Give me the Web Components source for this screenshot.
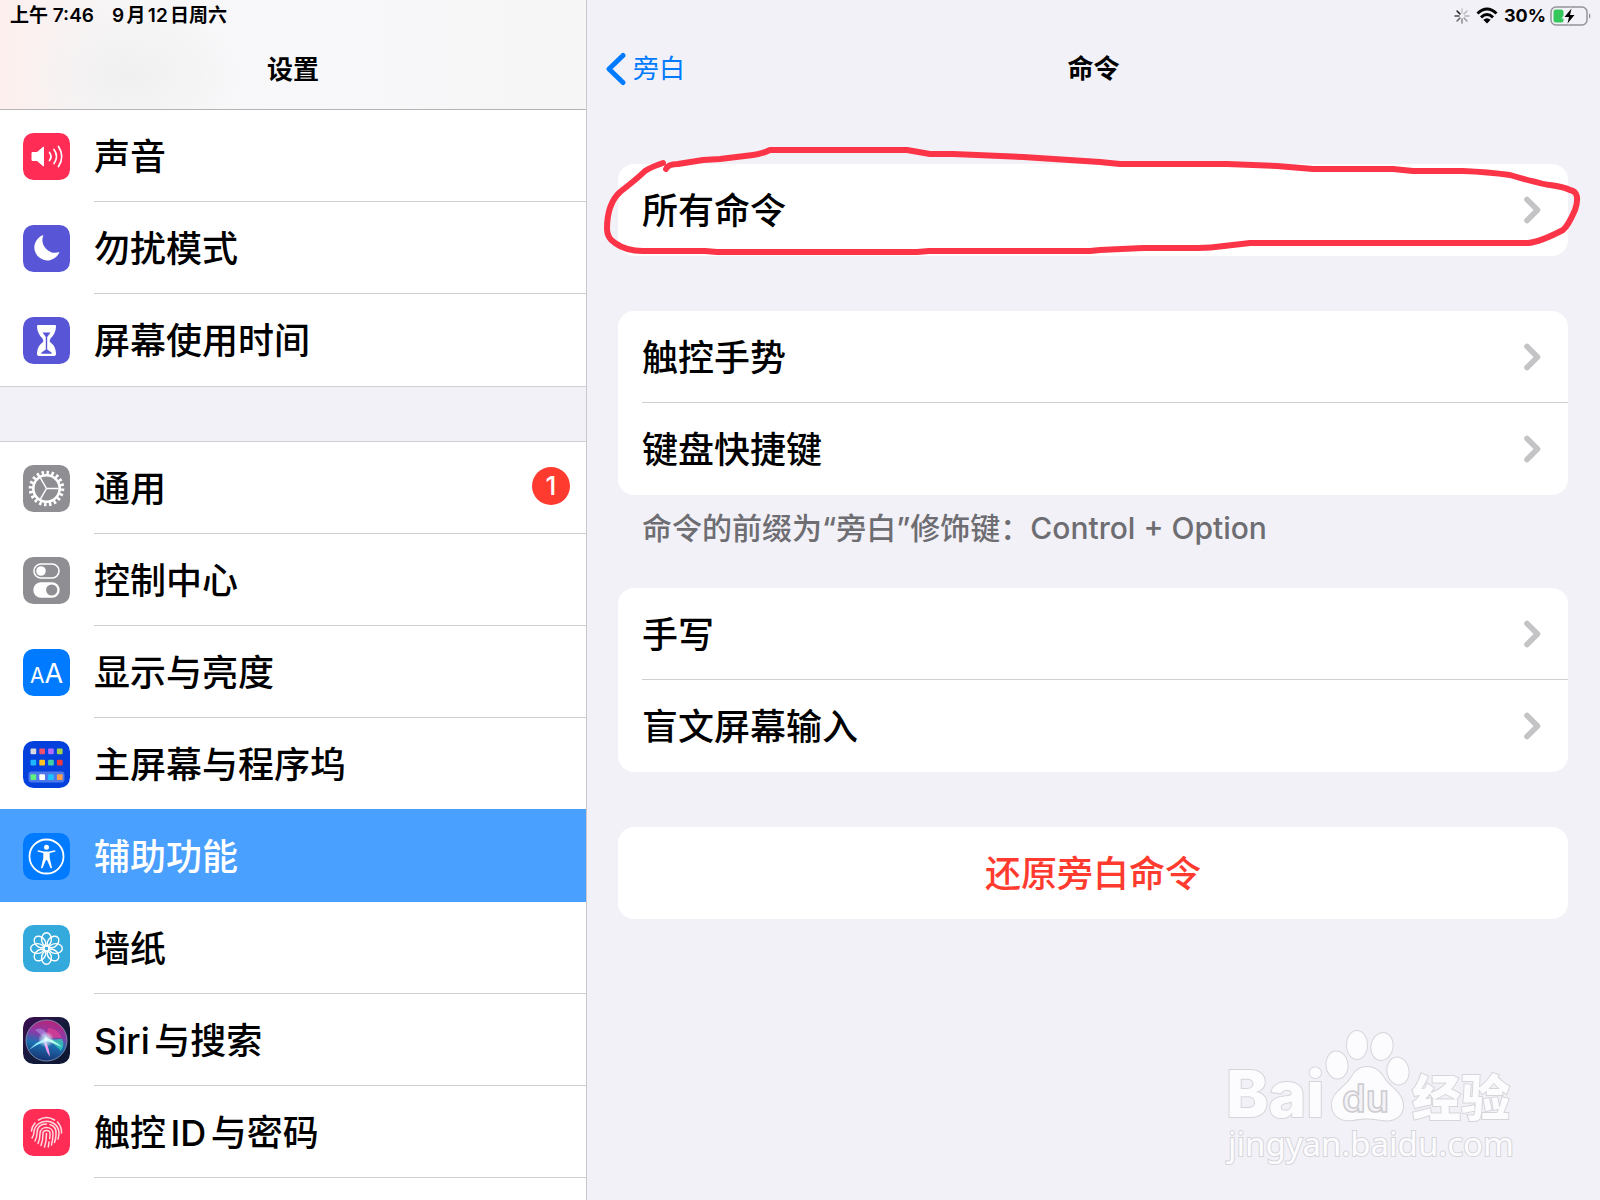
<!DOCTYPE html>
<html lang="zh-CN">
<head>
<meta charset="utf-8">
<meta name="viewport" content="width=device-width, initial-scale=1">
<title>设置</title>
<style>
  body {
    margin: 0;
    background: #f2f1f7;
    color: #000;
    font-family: Inter, "Noto Sans CJK SC", sans-serif;
    text-autospace: normal;
  }
</style>
</head>
<body>

<settings-app></settings-app>

<script>
// 47x47 tiles, the colour fills the rounded square
const ICONS = {
  sound: {
    color: '#ff2d55',
    art: `
      <path fill="#fff" stroke="#fff" stroke-linejoin="round" d="M9 19.5h5l6.5-5.5v19l-6.5-5.5h-5z"/>
      <g fill="none" stroke="#fff" stroke-width="1.7" stroke-linecap="round">
        <path d="M26.5 19.5q3 4 0 8M31 16.5q5 7 0 14M35.5 13.5q6.5 10 0 20"/>
      </g>`
  },
  moon: {
    color: '#5856d6',
    art: `<path fill="#fff" d="M20.5 10A13 13 0 1 0 36.5 27A12.8 12.8 0 0 1 20.5 10z"/>`
  },
  hourglass: {
    color: '#5856d6',
    art: `
      <path fill="#fff" d="M15 8h17q1.5 0 1 2c-.5 5-2 8-5.5 11.5q-1.5 2 0 4C31 28 32.5 31 33 36q.3 3-2 3H16q-2.3 0-2-3c.5-5 2-8 5.5-10.5q1.5-2 0-4C16 18 14.5 15 14 10q-.3-2 1-2z"/>
      <path fill="#5856d6" d="M19.5 15.5h8L24.2 20v12.5l4.3 3q1 1.3-.8 1.3h-8.4q-1.8 0-.8-1.3l4.3-3V20z"/>`
  },
  gear: {
    color: '#8e8e93',
    art: `
      <g fill="none" stroke="#fff">
        <circle cx="23.5" cy="23.5" r="13.2" stroke-width="2.6"/>
        <circle cx="23.5" cy="23.5" r="15.9" stroke-width="3.8" pathLength="40" stroke-dasharray="1 1"/>
        <path stroke-width="1.5" d="M23.5 23.5h12M23.5 23.5l-6-10.4M23.5 23.5l-6 10.4"/>
      </g>`
  },
  toggles: {
    color: '#8e8e93',
    art: `
      <rect x="11" y="7" width="25" height="14" rx="7" fill="none" stroke="#fff" stroke-width="1.6"/>
      <circle cx="18" cy="14" r="4.8" fill="#fff"/>
      <rect x="10.3" y="25.3" width="26.4" height="15.4" rx="7.7" fill="#fff"/>
      <circle cx="28.7" cy="33" r="5.6" fill="#8e8e93"/>`
  },
  text: {
    color: '#007aff',
    art: `
      <g fill="#fff" font-family="Inter, sans-serif" font-weight="400">
        <text x="7" y="33.5" font-size="21">A</text>
        <text x="21.5" y="33.5" font-size="27">A</text>
      </g>`
  },
  home: {
    color: '#0340dc',
    art: `
      <rect x="5.5" y="30.5" width="36" height="11" rx="3" fill="#4d78ea"/>
      ${['#d9d9de', '#f4516c', '#b26bff', '#a4d24a', '#1fb8ff', '#ffc31f', '#41d1a4', '#f0393c', '#5ff07e', '#ffffff', '#1fc3ff', '#ff9d4d']
        .map((fill, i) => `<rect x="${7.5 + (i % 4) * 8.8}" y="${[7.5, 18.7, 33.2][Math.floor(i / 4)]}" width="5.7" height="5.7" rx="1" fill="${fill}"/>`).join('')}`
  },
  access: {
    color: '#007aff',
    art: `
      <circle cx="23.5" cy="23.5" r="17" fill="none" stroke="#fff" stroke-width="1.8"/>
      <circle cx="23.5" cy="14.2" r="2.5" fill="#fff"/>
      <path fill="#fff" d="M15 17.3l6 1.1h5l6-1.1q1 .8 0 1.4l-5.3 1.3v5l2.3 9.7q-.7 1-1.5.2L24 27h-1l-3.5 7.9q-.8.8-1.5-.2l2.3-9.7v-5L15 18.7q-1-.6 0-1.4z"/>`
  },
  flower: {
    color: '#34aadc',
    art: `
      <g fill="none" stroke="#fff" stroke-width="1.4">
        ${[0, 45, 90, 135, 180, 225, 270, 315]
          .map(a => `<ellipse cx="23.5" cy="14.3" rx="4.9" ry="6.6" transform="rotate(${a} 23.5 23.5)"/>`).join('')}
        <circle cx="23.5" cy="23.5" r="2.6"/>
      </g>`
  },
  siri: {
    color: 'url(#night)',
    art: `
      <defs>
        <linearGradient id="night" x1="0" y1="0" x2="1" y2="1">
          <stop offset="0" stop-color="#3d0d52"/><stop offset=".5" stop-color="#151b3b"/><stop offset="1" stop-color="#0c1530"/>
        </linearGradient>
        <linearGradient id="orb" x1=".6" y1="0" x2=".4" y2="1">
          <stop offset="0" stop-color="#b82478"/><stop offset=".35" stop-color="#8b3aa8"/><stop offset=".6" stop-color="#1d6fb0"/><stop offset="1" stop-color="#16306f"/>
        </linearGradient>
        <radialGradient id="glow">
          <stop offset="0" stop-color="#fff"/><stop offset=".4" stop-color="#c6f3ff" stop-opacity=".7"/><stop offset="1" stop-color="#fff" stop-opacity="0"/>
        </radialGradient>
      </defs>
      <circle cx="23.5" cy="23.5" r="20.5" fill="url(#orb)" stroke="#8da0bb" stroke-width=".8"/>
      <path fill="#31d3ba" opacity=".75" d="M23 23l16-1q3 5-1 12-6-7-15-11z"/>
      <path fill="#ee3f91" opacity=".6" d="M23 22l2-11q10 0 14 10-8-1-16 1z"/>
      <path fill="#a78be2" opacity=".65" d="M23 22L12 13q5-3 9 0 4 4 3 9z"/>
      <path fill="#8be8fa" d="M6 33q8-9 18-12 2 3-2 4-8 2-16 8z"/>
      <path fill="#b8fff1" d="M22 20q9 3 17 10-9-4-17-7z"/>
      <path fill="#f19af0" d="M22 23q4 7 5 17-5-7-6-16z"/>
      <circle cx="23" cy="22.5" r="8" fill="url(#glow)"/>`
  },
  finger: {
    color: '#ff2d55',
    art: `
      <g fill="none" stroke="#ffdce3" stroke-width="1.5" stroke-linecap="round">
        <path d="M15.5 11q8-5 16 0M8.5 22q0-4 3.5-8M38.5 24q.5-6-4-11"/>
        <path d="M9 29q2-3 2-6c1-14 24-15 25 1q0 3-1 6M12 32q2-4 2-8c0-8 6-9 9.5-9M27 15.5c5 1.5 6.500 5 6 10q0 4-1.5 8"/>
        <path d="M15 34.5q2-4 2-10c0-8 13-8 13 0q0 6-1.500 11.500M18 36.500q2-5 2-12c0-4 7-4 7 0q0 3-.3 5M26 33l-.7 5M21.500 38q2-6 2-13.500"/>
      </g>`
  }
}

const MENU = [
  [
    { icon: 'sound', label: '声音' },
    { icon: 'moon', label: '勿扰模式' },
    { icon: 'hourglass', label: '屏幕使用时间', last: true }
  ],
  [
    { icon: 'gear', label: '通用', badge: 1 },
    { icon: 'toggles', label: '控制中心' },
    { icon: 'text', label: '显示与亮度' },
    { icon: 'home', label: '主屏幕与程序坞' },
    { icon: 'access', label: '辅助功能', selected: true },
    { icon: 'flower', label: '墙纸' },
    { icon: 'siri', label: 'Siri与搜索' },
    { icon: 'finger', label: '触控ID与密码' }
  ]
]

class SettingsIcon extends HTMLElement {
  connectedCallback () {
    const icon = ICONS[this.getAttribute('name')]
    this.attachShadow({ mode: 'open' }).innerHTML = /*html*/`
      <style>
        :host { display: block; flex: none; width: 47px; height: 47px; }
        svg { display: block; width: 100%; height: 100%; }
      </style>
      <svg viewBox="0 0 47 47" aria-hidden="true">
        <rect width="47" height="47" rx="10.5" fill="${icon.color}"/>
        ${icon.art}
      </svg>`
  }
}

class MenuRow extends HTMLElement {
  connectedCallback () {
    const badge = this.getAttribute('badge')
    this.attachShadow({ mode: 'open' }).innerHTML = /*html*/`
      <style>
        :host { display: block; }
        a {
          display: flex;
          align-items: center;
          gap: 24px;
          box-sizing: border-box;
          height: 92px;
          padding: 1px 0 0 23px;
          color: inherit;
          text-decoration: none;
        }
        .label {
          display: flex;
          flex: 1;
          align-items: center;
          justify-content: space-between;
          box-sizing: border-box;
          height: 100%;
          padding: 0 16px 4px 0;
          border-bottom: 1px solid #cfced3;
          font-size: 36px;
          font-weight: 500;
        }
        .badge {
          width: 38px;
          border-radius: 50%;
          background: #ff3b30;
          color: #fff;
          font-size: 26px;
          line-height: 38px;
          text-align: center;
        }
        :host([selected]) {
          background: #4aa0ff;
          box-shadow: 0 -1px #4aa0ff;
          color: #fff;
        }
        :host([selected]) .label, :host([last]) .label { border-color: transparent; }
      </style>
      <a href="#">
        <settings-icon name="${this.getAttribute('icon')}"></settings-icon>
        <span class="label"><slot></slot>${badge ? `<span class="badge">${badge}</span>` : ''}</span>
      </a>`
  }
}

class MenuGap extends HTMLElement {
  connectedCallback () {
    this.attachShadow({ mode: 'open' }).innerHTML = /*html*/`
      <style>
        :host {
          display: block;
          box-sizing: border-box;
          height: 56px;
          border: solid #cfced3;
          border-width: 1px 0;
          background: #f2f1f7;
        }
      </style>`
  }
}

class SettingsMenu extends HTMLElement {
  connectedCallback () {
    const row = item => `
      <menu-row icon="${item.icon}"
        ${item.badge ? `badge="${item.badge}"` : ''}
        ${item.selected ? 'selected' : ''}
        ${item.last ? 'last' : ''}>${item.label}</menu-row>`

    this.attachShadow({ mode: 'open' }).innerHTML = /*html*/`
      <style>
        :host {
          display: block;
          border-right: 1px solid #c9c8ce;
          background: #fff;
        }
        header {
          border-bottom: 1px solid #b4b4b6;
          background:
            radial-gradient(ellipse 110px 70px at 130px 75px, #f0f0f1, transparent),
            linear-gradient(90deg, #fcefed, #f7f6f7 120px, #f8f8fa 300px, #f6f6f7);
        }
        .status {
          display: flex;
          gap: 18px;
          padding-left: 10px;
          font-size: 19px;
          font-weight: 600;
          line-height: 31px;
        }
        h1 {
          margin: 0;
          font-size: 26px;
          font-weight: 600;
          line-height: 78px;
          text-align: center;
        }
        section { display: flex; flex-direction: column; }
      </style>
      <header>
        <div class="status"><span>上午 7:46</span><span>9月12日周六</span></div>
        <h1>设置</h1>
      </header>
      <nav>
        ${MENU.map(list => `<section>${list.map(row).join('')}</section>`).join('<menu-gap></menu-gap>')}
      </nav>`
  }
}

class CommandRow extends HTMLElement {
  connectedCallback () {
    this.attachShadow({ mode: 'open' }).innerHTML = /*html*/`
      <style>
        :host { display: block; padding-left: 24px; }
        a {
          display: flex;
          align-items: center;
          justify-content: space-between;
          box-sizing: border-box;
          height: 92px;
          padding-right: 27px;
          border-bottom: 1px solid #cfced3;
          color: inherit;
          font-size: 36px;
          font-weight: 500;
          text-decoration: none;
        }
        span { padding-bottom: 4px; }
        :host(:last-of-type) a { border-color: transparent; }
      </style>
      <a href="#">
        <span><slot></slot></span>
        <svg width="18" height="28" viewBox="0 0 18 28" fill="none" stroke="#c4c4c7" stroke-width="5.6" stroke-linecap="round" stroke-linejoin="round" aria-hidden="true"><path d="M4 3.5L14.5 14L4 24.5"/></svg>
      </a>`
  }
}

class CommandGroup extends HTMLElement {
  connectedCallback () {
    this.attachShadow({ mode: 'open' }).innerHTML = /*html*/`
      <style>
        :host {
          display: block;
          position: relative;
          border-radius: 16px;
          background: #fff;
        }
      </style>
      <slot></slot>`
  }
}

// hand drawn loop round a group, stretches with it
class RedLoop extends HTMLElement {
  connectedCallback () {
    this.attachShadow({ mode: 'open' }).innerHTML = /*html*/`
      <style>
        :host {
          position: absolute;
          inset: -20px;
          pointer-events: none;
        }
        svg { display: block; width: 100%; height: 100%; }
        path { vector-effect: non-scaling-stroke; }
      </style>
      <svg viewBox="0 0 990 132" preserveAspectRatio="none" aria-hidden="true">
        <path fill="none" stroke="#fb3447" stroke-width="6" stroke-linecap="round" stroke-linejoin="round"
          d="M65 19Q53 23 47 27Q40 34 22 48Q9 60 9 85Q9 94 17 99Q28 107 45 107H107L119 108H319L331 107H492L502 106L545 104H600Q612 104 626 102L652 99H930Q942 98 965 86Q970 82 977 66Q983 48 972 46C962 41 950 42 938 38Q925 35 912 31Q890 28 865 27H815L795 25H715L679 22L629 20H522L502 18L425 13L379 11L355 10H332L309 6H172Q163 10 155 11L122 15L105 16L80 20Q70 20 68 25"/>
      </svg>`
  }
}

class BrandMark extends HTMLElement {
  connectedCallback () {
    this.attachShadow({ mode: 'open' }).innerHTML = /*html*/`
      <style>
        :host { display: block; width: 300px; height: 150px; }
        svg { display: block; }
        .ink { fill: #fcfcfe; stroke: #d6d5da; stroke-width: 2; paint-order: stroke; }
      </style>
      <svg width="300" height="150" viewBox="0 0 300 150">
        <text class="ink" x="1" y="89" font-family="Inter, sans-serif" font-size="64" font-weight="800">Bai</text>
        <g class="ink" transform="translate(0 -2)">
          <ellipse cx="112" cy="39" rx="10.5" ry="13.500" transform="rotate(-6 112 39)"/>
          <ellipse cx="132" cy="19" rx="10" ry="14"/>
          <ellipse cx="157" cy="20.500" rx="10.500" ry="13.500" transform="rotate(12 157 20.500)"/>
          <ellipse cx="173" cy="45" rx="10.500" ry="13.500" transform="rotate(-10 173 45)"/>
          <path d="M142 41C151 41 155 46 159 52C164 61 178 66 178 80C178 91 168 96 157 94C147 92 137 92 128 94C115 96 107 89 107 79C107 66 120 62 126 52C130 45 134 41 142 41z"/>
        </g>
        <text x="117" y="84" font-family="Inter, sans-serif" font-size="38" font-weight="600" fill="#f3f2f7" stroke="#cccbd0" stroke-width="1.5">du</text>
        <text class="ink" x="187" y="88" font-family="'Noto Sans CJK SC', sans-serif" font-size="49" font-weight="900">经验</text>
        <text class="ink" x="3" y="128" font-family="'Noto Sans', sans-serif" font-size="33">jingyan.baidu.com</text>
      </svg>`
  }
}

class CommandPane extends HTMLElement {
  connectedCallback () {
    const ray = i => `<path d="M8 5V1" opacity="${[.2, .25, .3, .4, .5, .65, .8, 1][i]}" transform="rotate(${i * 45} 8 8)"/>`

    this.attachShadow({ mode: 'open' }).innerHTML = /*html*/`
      <style>
        :host { display: block; position: relative; }
        .status {
          display: flex;
          align-items: center;
          justify-content: flex-end;
          gap: 6px;
          height: 31px;
          padding-right: 8px;
          font-size: 18px;
          font-weight: 700;
        }
        .status span { margin-right: -2px; }
        .bar {
          display: grid;
          grid-template-columns: 1fr auto 1fr;
          align-items: center;
          height: 76px;
          padding: 0 18px 2px;
          font-size: 26px;
        }
        .bar a {
          display: flex;
          align-items: center;
          gap: 6px;
          color: #007aff;
          text-decoration: none;
        }
        h2 { margin: 0; font-size: 26px; font-weight: 600; line-height: 76px; }
        .bar span { line-height: 76px; }
        .groups {
          display: flex;
          flex-direction: column;
          gap: 55px;
          padding: 55px 32px 0 31px;
        }
        .note {
          margin: 0;
          padding: 15px 24px 0;
          color: #6d6d72;
          font-size: 30px;
          font-weight: 500;
          line-height: 36px;
        }
        .noted { margin-bottom: -13px; }
        button {
          display: block;
          width: 100%;
          height: 92px;
          padding: 0 0 4px;
          border: 0;
          background: none;
          color: #ff3b30;
          font: inherit;
          font-size: 36px;
          font-weight: 500;
        }
        brand-mark { position: absolute; right: 75px; bottom: 22px; }
      </style>
      <div class="status">
        <svg width="16" height="16" viewBox="0 0 16 16" stroke="#222" stroke-width="1.5" stroke-linecap="round" aria-hidden="true">${[0, 1, 2, 3, 4, 5, 6, 7].map(ray).join('')}</svg>
        <svg width="22" height="17" viewBox="0 0 22 17" aria-hidden="true">
          <g fill="none" stroke="#000" stroke-width="3"><path d="M1.500 6.500Q11-2.500 20.500 6.500M5 10.300Q11 4.700 17 10.300"/></g>
          <path d="M11 16.500L7.300 12.800Q11 9.800 14.700 12.800z"/>
        </svg>
        <span>30%</span>
        <svg width="42" height="20" viewBox="0 0 42 20" aria-hidden="true">
          <rect x="1" y="1" width="36" height="18" rx="5" fill="none" stroke="#949498" stroke-width="1.5"/>
          <path fill="#949498" d="M39 7q3 3 0 6z"/>
          <rect x="3.5" y="3.5" width="10" height="13" rx="2.5" fill="#34c759"/>
          <path stroke="#f2f1f7" stroke-width="3" paint-order="stroke" d="M21.500 2.500L14.500 11h4.500L17.500 17.500L24.500 9h-4.500z"/>
        </svg>
      </div>
      <div class="bar">
        <a href="#">
          <svg width="22" height="34" viewBox="0 0 22 34" fill="none" stroke="#007aff" stroke-width="5" stroke-linecap="round" stroke-linejoin="round" aria-hidden="true"><path d="M18 3.500L4 17L18 30.500"/></svg>
          <span>旁白</span>
        </a>
        <h2>命令</h2>
      </div>
      <div class="groups">
        <command-group>
          <command-row>所有命令</command-row>
          <red-loop></red-loop>
        </command-group>
        <div class="noted">
          <command-group>
            <command-row>触控手势</command-row>
            <command-row>键盘快捷键</command-row>
          </command-group>
          <p class="note">命令的前缀为“旁白”修饰键：Control + Option</p>
        </div>
        <command-group>
          <command-row>手写</command-row>
          <command-row>盲文屏幕输入</command-row>
        </command-group>
        <command-group>
          <button type="button">还原旁白命令</button>
        </command-group>
      </div>
      <brand-mark></brand-mark>`
  }
}

class SettingsApp extends HTMLElement {
  connectedCallback () {
    this.attachShadow({ mode: 'open' }).innerHTML = /*html*/`
      <style>
        :host {
          display: grid;
          grid-template-columns: 587px 1fr;
          min-height: 100vh;
        }
      </style>
      <settings-menu></settings-menu>
      <command-pane></command-pane>`
  }
}

customElements.define('settings-icon', SettingsIcon)
customElements.define('menu-row', MenuRow)
customElements.define('menu-gap', MenuGap)
customElements.define('settings-menu', SettingsMenu)
customElements.define('command-row', CommandRow)
customElements.define('command-group', CommandGroup)
customElements.define('red-loop', RedLoop)
customElements.define('brand-mark', BrandMark)
customElements.define('command-pane', CommandPane)
customElements.define('settings-app', SettingsApp)
</script>
</body>
</html>
